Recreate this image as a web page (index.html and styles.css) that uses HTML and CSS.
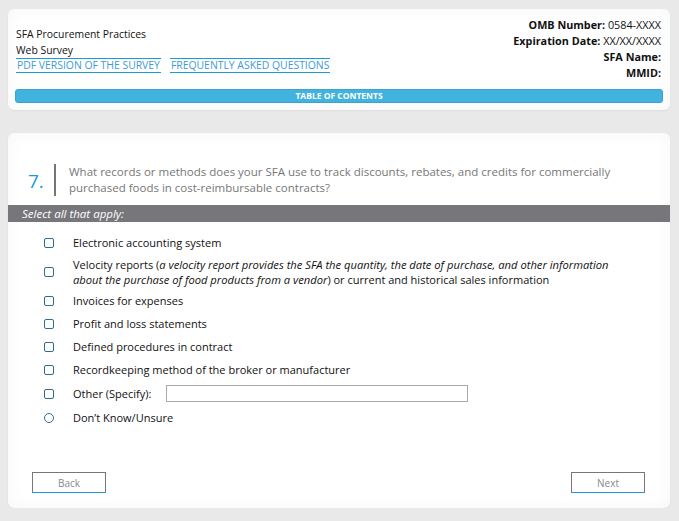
FILE: index.html
```html
<!DOCTYPE html>
<html lang="en">
<head>
    <meta charset="UTF-8">
    <meta name="viewport" content="width=device-width, initial-scale=1.0">
    <title>SFA Procurement Practices Web Survey</title>
    <link rel="stylesheet" href="styles.css">
</head>
<body>
    <div class="card header-card">
        <div class="header-top">
            <div class="survey-title">
                <div>SFA Procurement Practices</div>
                <div>Web Survey</div>
                <div class="header-links">
                    <a href="#" class="header-link">PDF VERSION OF THE SURVEY</a>
                    <a href="#" class="header-link">FREQUENTLY ASKED QUESTIONS</a>
                </div>
            </div>
            <div class="survey-info">
                <div><b>OMB Number:</b> 0584-XXXX</div>
                <div><b>Expiration Date:</b> XX/XX/XXXX</div>
                <div><b>SFA Name:</b></div>
                <div><b>MMID:</b></div>
            </div>
        </div>
        <button class="toc-btn">TABLE OF CONTENTS</button>
    </div>

    <div class="card question-card">
        <div class="question">
            <span class="q-num">7.</span>
            <span class="q-text">What records or methods does your SFA use to track discounts, rebates, and credits for commercially purchased foods in cost-reimbursable contracts?</span>
        </div>
        <div class="instructions">Select all that apply:</div>
        <ul class="options">
            <li><span class="check"></span><span>Electronic accounting system</span></li>
            <li class="multi"><span class="check"></span><span>Velocity reports (<i>a velocity report provides the SFA the quantity, the date of purchase, and other information about the purchase of food products from a vendor</i>) or current and historical sales information</span></li>
            <li><span class="check"></span><span>Invoices for expenses</span></li>
            <li><span class="check"></span><span>Profit and loss statements</span></li>
            <li><span class="check"></span><span>Defined procedures in contract</span></li>
            <li><span class="check"></span><span>Recordkeeping method of the broker or manufacturer</span></li>
            <li><span class="check"></span><span>Other (Specify):</span><input type="text" class="specify-input"></li>
            <li><span class="check radio"></span><span>Don’t Know/Unsure</span></li>
        </ul>
        <div class="nav">
            <button class="nav-btn">Back</button>
            <button class="nav-btn">Next</button>
        </div>
    </div>
</body>
</html>
```

FILE: styles.css
```css
body {
    font-family: "Open Sans", Arial, sans-serif;
    font-size: 11px;
    color: #111;
    background-color: #e9e9e9;
    margin: 0;
    padding: 9px 9px 0 8px;
}
.card {
    background-color: #fff;
    border-radius: 6px;
    box-shadow: inset 0 0 18px rgba(0, 0, 0, 0.035), 0 1px 2px rgba(0, 0, 0, 0.05);
}
.header-card {
    padding: 8px 7px 7px 7px;
}
.header-top {
    display: flex;
    justify-content: space-between;
    align-items: center;
    padding: 0 2px 0 1px;
    font-size: 10.4px;
}
.survey-title {
    line-height: 16px;
}
.header-links {
    display: flex;
    gap: 9px;
}
.header-link {
    color: #3b9bd8;
    text-decoration: none;
    border-top: 1px solid #1a9bd7;
    border-bottom: 1px solid #1a9bd7;
    line-height: 13px;
    padding: 0 1px;
}
.survey-info {
    text-align: right;
    line-height: 16px;
    font-size: 10.8px;
}
.survey-info b {
    font-weight: 700;
}
.toc-btn {
    display: block;
    width: 100%;
    margin-top: 8px;
    height: 14px;
    padding: 0;
    border: 1px solid #3aa3cf;
    border-radius: 3px;
    background-color: #42b2de;
    color: #fff;
    font-family: "Open Sans", Arial, sans-serif;
    font-size: 8.5px;
    font-weight: 700;
    line-height: 12px;
}
.question-card {
    margin-top: 23px;
    padding: 31px 0 15px 0;
}
.question {
    display: flex;
    align-items: center;
    padding: 0 20px;
}
.q-num {
    width: 26px;
    color: #1a9bd7;
    font-size: 19px;
    line-height: 20px;
    padding-top: 1px;
}
.q-text {
    border-left: 2px solid #777;
    padding-left: 13px;
    color: #777;
    font-size: 11.5px;
    line-height: 16px;
    max-width: 560px;
}
.instructions {
    margin-top: 9px;
    background-color: #77767b;
    color: #fff;
    font-style: italic;
    font-size: 11.5px;
    line-height: 17px;
    padding-left: 14px;
}
.options {
    list-style: none;
    margin: 13px 0 0 0;
    padding: 0 40px 0 36px;
}
.options li {
    display: flex;
    align-items: center;
    line-height: 15px;
    margin-bottom: 8px;
}
.options li.multi {
    margin-top: -1px;
    margin-bottom: 6px;
}
.options i {
    font-size: 11.2px;
}
.check {
    flex: none;
    width: 8px;
    height: 8px;
    border: 1px solid #2f6d92;
    border-radius: 2px;
    margin-right: 19px;
}
.check.radio {
    border-radius: 50%;
}
.specify-input {
    width: 298px;
    height: 13px;
    margin-left: 15px;
    border: 1px solid #aaa;
    padding: 1px;
}
.nav {
    display: flex;
    justify-content: space-between;
    padding: 0 25px 0 24px;
    margin-top: 47px;
}
.nav-btn {
    width: 74px;
    height: 21px;
    background-color: #fff;
    border: 1px solid #777;
    border-bottom-color: #1a9bd7;
    color: #888;
    font-family: "Open Sans", Arial, sans-serif;
    font-size: 10px;
    padding: 0;
}
```
